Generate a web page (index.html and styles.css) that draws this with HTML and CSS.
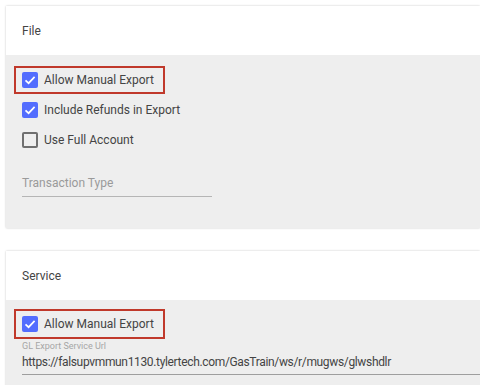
FILE: index.html
```html
<!DOCTYPE html>
<html>
<head>
<meta charset="utf-8">
<link rel="stylesheet" href="styles.css">
</head>
<body>
<div class="page">
  <section class="card">
    <div class="card-header">File</div>
    <div class="card-body file-body">
      <div class="row">
        <label class="highlight">
          <span class="cb checked"><svg viewBox="0 0 16 16" width="16" height="16"><path d="M3.5 8.3 L6.6 11.2 L12.6 4.9" fill="none" stroke="#fff" stroke-width="1.7"/></svg></span>
          <span class="lbl">Allow Manual Export</span>
        </label>
      </div>
      <div class="row">
        <label class="plain">
          <span class="cb checked"><svg viewBox="0 0 16 16" width="16" height="16"><path d="M3.5 8.3 L6.6 11.2 L12.6 4.9" fill="none" stroke="#fff" stroke-width="1.7"/></svg></span>
          <span class="lbl">Include Refunds in Export</span>
        </label>
      </div>
      <div class="row">
        <label class="plain">
          <span class="cb"></span>
          <span class="lbl">Use Full Account</span>
        </label>
      </div>
      <div class="field short">
        <span class="placeholder">Transaction Type</span>
      </div>
    </div>
  </section>
  <section class="card second">
    <div class="card-header">Service</div>
    <div class="card-body service-body">
      <div class="row">
        <label class="highlight tall">
          <span class="cb checked"><svg viewBox="0 0 16 16" width="16" height="16"><path d="M3.5 8.3 L6.6 11.2 L12.6 4.9" fill="none" stroke="#fff" stroke-width="1.7"/></svg></span>
          <span class="lbl">Allow Manual Export</span>
        </label>
      </div>
      <div class="field long">
        <span class="float-label">GL Export Service Url</span>
        <span class="value">https://falsupvmmun1130.tylertech.com/GasTrain/ws/r/mugws/glwshdlr</span>
      </div>
    </div>
  </section>
</div>
</body>
</html>
```

FILE: styles.css
```css
html, body {
  margin: 0;
  padding: 0;
  background: #ffffff;
  font-family: Roboto, "Liberation Sans", sans-serif;
  color: #444444;
  overflow: hidden;
}

.page {
  padding: 6px 0 0 6px;
  width: 480px;
  box-sizing: border-box;
}

.card {
  background: #ffffff;
  box-shadow: 0 0 2px rgba(0, 0, 0, 0.22);
  width: 474px;
}

.card.second {
  margin-top: 23px;
}

.card-header {
  height: 49px;
  padding-left: 16px;
  display: flex;
  align-items: center;
  font-size: 12px;
  color: #444444;
}

.card-body {
  background: #eeeeee;
  padding: 9px 16px 0 16px;
}

.file-body {
  padding-top: 10px;
  padding-bottom: 31px;
}

.service-body {
  padding-right: 0;
  padding-bottom: 12px;
}

.row {
  height: 30px;
  display: flex;
  align-items: center;
}

.highlight,
.plain {
  display: flex;
  align-items: center;
  gap: 6px;
}

.highlight {
  height: 24px;
  border: 2px solid #c0392b;
  padding: 0 9px 0 6px;
  margin-left: -8px;
}

.highlight.tall {
  height: 26px;
}

.cb {
  width: 16px;
  height: 16px;
  box-sizing: border-box;
  border: 2px solid #6f6f6f;
  border-radius: 2px;
  display: flex;
}

.cb.checked {
  border: none;
  background: #536dfe;
}

.lbl {
  font-size: 12px;
  color: #444444;
}

.field {
  display: flex;
  flex-direction: column;
  border-bottom: 1px solid #9e9e9e;
}

.field.short {
  width: 190px;
  margin-top: 20px;
  padding-bottom: 5px;
  border-bottom-color: #b5b5b5;
}

.placeholder {
  font-size: 12px;
  line-height: 16px;
  color: #9a9a9a;
}

.field.long {
  padding-bottom: 3px;
}

.float-label {
  font-size: 9px;
  line-height: 14px;
  color: #a6a6a6;
}

.value {
  font-size: 12px;
  letter-spacing: -0.34px;
  line-height: 18px;
  color: #444444;
}
```
